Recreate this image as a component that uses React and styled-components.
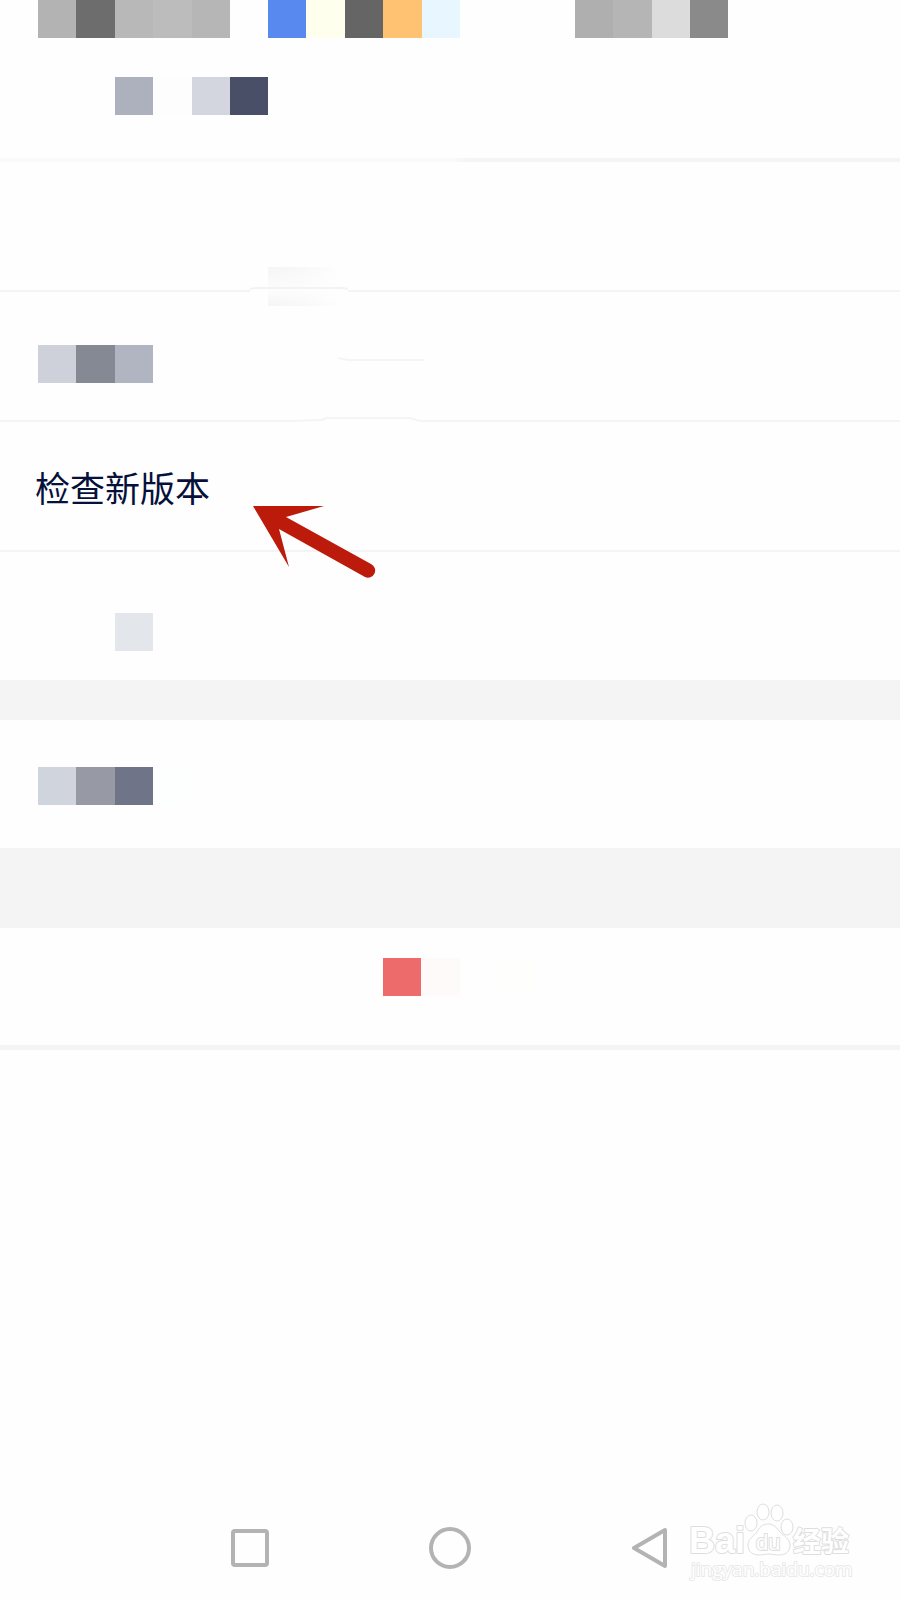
import styled, { createGlobalStyle } from "styled-components";

const COLOR = {
  page: "#fefefe",
  line: "#f4f4f4",
  ink: "#06113a",
  nav: "#b3b3b3",
  arrow: "#bc1a0b",
};

const GlobalStyle = createGlobalStyle`
  * {
    box-sizing: border-box;
  }

  body {
    margin: 0;
    background: ${COLOR.page};
    font-family: "Noto Sans CJK SC", sans-serif;
  }
`;

const Page = styled.div`
  position: relative;
  display: flex;
  flex-direction: column;
  min-height: 100vh;
`;

const Header = styled.header`
  display: flex;
  flex-direction: column;
  gap: 39px;
  padding-bottom: 43px;
`;

const HeaderLine = styled.div`
  display: flex;
  padding-left: ${({ $left }) => $left}px;
`;

const Mosaic = styled.div`
  display: flex;
  width: ${({ $width }) => $width}px;
  height: 38px;
  margin-right: ${({ $after }) => $after || 0}px;
`;

const Tile = styled.span`
  flex: 1;
  background: ${({ $color }) => $color};
`;

const Divider = styled.div`
  height: ${({ $size }) => $size}px;
  background: ${COLOR.line};
`;

const FadedDivider = styled(Divider)`
  background: linear-gradient(to right, #fafafa 50%, ${COLOR.line} 52%);
`;

const List = styled.main`
  display: flex;
  flex-direction: column;
`;

const Row = styled.section`
  position: relative;
  display: flex;
  height: ${({ $height }) => $height || 128}px;
  padding-top: ${({ $top }) => $top || 0}px;
  padding-left: ${({ $left }) => $left || 0}px;
`;

const RowButton = styled.button`
  flex: 1;
  padding: 2px 0 0 35px;
  border: 0;
  background: none;
  color: ${COLOR.ink};
  font-family: inherit;
  font-size: 35px;
  line-height: 52px;
  text-align: left;
  cursor: pointer;
`;

const Arrow = styled.svg`
  position: absolute;
  top: 82px;
  left: 252px;
  pointer-events: none;
`;

const Smudge = styled.svg`
  position: absolute;
  top: ${({ $top }) => $top}px;
  left: ${({ $left }) => $left}px;
  z-index: 1;
`;

const NavBar = styled.nav`
  display: flex;
  justify-content: center;
  gap: 136px;
  margin-top: auto;
  padding-bottom: 20px;
`;

const NavButton = styled.button`
  display: flex;
  align-items: center;
  justify-content: center;
  width: 64px;
  height: 64px;
  padding: 0;
  border: 0;
  background: none;
  cursor: pointer;

  svg {
    fill: none;
    stroke: ${COLOR.nav};
    stroke-width: 4;
    stroke-linejoin: round;
  }
`;

const Watermark = styled.svg`
  position: absolute;
  right: 40px;
  bottom: 12px;
  fill: #ffffff;
  stroke: #dedede;
  stroke-width: 1;
  stroke-linejoin: round;
  pointer-events: none;

  text {
    stroke-width: 2;
    paint-order: stroke;
  }

  .site {
    stroke: #e9e9e9;
  }
`;

function Blocks({ colors, width, after }) {
  return (
    <Mosaic $width={width} $after={after}>
      {colors.map((color, i) => (
        <Tile key={i} $color={color} />
      ))}
    </Mosaic>
  );
}

function BaiduWatermark() {
  return (
    <Watermark width="180" height="90" viewBox="680 1498 180 90">
      <text
        x="689"
        y="1553"
        fontFamily="Liberation Sans"
        fontWeight="700"
        fontSize="36"
      >
        Bai
      </text>
      <ellipse cx="751" cy="1523" rx="6" ry="8" />
      <ellipse cx="763" cy="1512" rx="6" ry="8" />
      <ellipse cx="777" cy="1513" rx="6" ry="8" />
      <ellipse cx="787" cy="1527" rx="6" ry="8" />
      <path d="M768 1524c-6 0-9 4-11 8-3 4-9 7-9 13 0 7 5 10 11 10 4 0 6-1 10-1s6 1 10 1c6 0 11-3 11-10 0-6-6-9-10-13-3-4-6-8-12-8Z" />
      <text x="756" y="1550" fontFamily="Liberation Sans" fontSize="22">
        du
      </text>
      <text
        x="793"
        y="1552"
        fontFamily="Noto Sans CJK SC"
        fontWeight="700"
        fontSize="28"
      >
        经验
      </text>
      <text
        className="site"
        x="691"
        y="1576"
        fontFamily="Open Sans"
        fontSize="19"
      >
        jingyan.baidu.com
      </text>
    </Watermark>
  );
}

export default function App() {
  return (
    <>
      <GlobalStyle />
      <Page>
        <Header>
          <HeaderLine $left={38}>
            <Blocks
              width={192}
              after={38}
              colors={["#b3b3b3", "#6d6d6d", "#b8b8b8", "#bcbcbc", "#b6b6b6"]}
            />
            <Blocks
              width={192}
              after={115}
              colors={["#5889ef", "#ffffee", "#656565", "#ffc172", "#e8f7ff"]}
            />
            <Blocks
              width={153}
              colors={["#afafaf", "#b5b5b5", "#dcdcdc", "#8a8a8a"]}
            />
          </HeaderLine>
          <HeaderLine $left={115}>
            <Blocks
              width={153}
              colors={["#adb1bd", "#fdfdfd", "#d3d6de", "#494f67"]}
            />
          </HeaderLine>
        </Header>
        <FadedDivider $size={4} />

        <List>
          <Row>
            <Smudge $top={104} $left={250} width="98" height="42">
              <defs>
                <linearGradient id="fade">
                  <stop offset="0" stopColor="#f5f5f5" />
                  <stop offset="0.5" stopColor="#f8f8f8" />
                  <stop offset="1" stopColor={COLOR.page} />
                </linearGradient>
                <linearGradient id="veil" x2="0" y2="1">
                  <stop offset="0" stopColor={COLOR.page} stopOpacity="0" />
                  <stop offset="0.6" stopColor={COLOR.page} stopOpacity="0.8" />
                  <stop offset="1" stopColor={COLOR.page} stopOpacity="0" />
                </linearGradient>
              </defs>
              <path d="M0 0h98v42H0Z" fill={COLOR.page} />
              <path d="M18 1h72v39H18Z" fill="url(#fade)" />
              <path d="M18 1h72v39H18Z" fill="url(#veil)" />
              <path d="M0 23l5-1h88l5 1" fill="none" stroke="#f3f3f3" strokeWidth="2" />
            </Smudge>
          </Row>
          <Divider $size={2} />
          <Row $top={53} $left={38}>
            <Blocks width={115} colors={["#ced1da", "#858993", "#b1b4c1"]} />
            <Smudge $top={64} $left={332} width="94" height="8">
              <path d="M6 2l10 2h76" fill="none" stroke="#f5f5f5" strokeWidth="2" />
            </Smudge>
            <Smudge $top={124} $left={290} width="130" height="7">
              <path d="M0 0h130v7H0Z" fill={COLOR.page} />
              <path d="M0 5l32-1 4-2h84l10 3" fill="none" stroke="#f4f4f4" strokeWidth="2" />
            </Smudge>
          </Row>
          <Divider $size={2} />
          <Row>
            <RowButton type="button">检查新版本</RowButton>
            <Arrow width="126" height="80" viewBox="252 504 126 80">
              <path
                d="M253 506H324L286 517L371 564A7 7 0 0 1 365 577L279 529L289 567Z"
                fill={COLOR.arrow}
              />
            </Arrow>
          </Row>
          <Divider $size={2} />
          <Row $top={61} $left={115}>
            <Blocks width={38} colors={["#e3e6eb"]} />
          </Row>
          <Divider $size={40} />
          <Row $top={47} $left={38}>
            <Blocks
              width={153}
              colors={["#d0d4dd", "#979aa4", "#6f7488", "#fdffff"]}
            />
          </Row>
          <Divider $size={80} />
          <Row $height={117} $top={30} $left={383}>
            <Blocks
              width={153}
              colors={["#ed6b6b", "#fefafa", "#fefefe", "#fefefc"]}
            />
          </Row>
          <Divider $size={5} />
        </List>

        <NavBar>
          <NavButton type="button" aria-label="最近任务">
            <svg width="38" height="38">
              <rect x="2" y="2" width="34" height="34" rx="2" />
            </svg>
          </NavButton>
          <NavButton type="button" aria-label="主屏幕">
            <svg width="42" height="42">
              <circle cx="21" cy="21" r="19" />
            </svg>
          </NavButton>
          <NavButton type="button" aria-label="返回">
            <svg width="36" height="42">
              <path d="M33 3v36L2 21Z" />
            </svg>
          </NavButton>
        </NavBar>
        <BaiduWatermark />
      </Page>
    </>
  );
}
